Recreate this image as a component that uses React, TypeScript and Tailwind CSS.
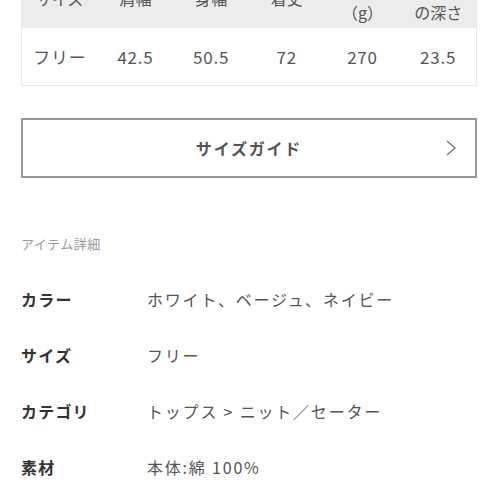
import React from "react";

const font = { fontFamily: '"Noto Sans CJK JP", "Noto Sans", sans-serif' };

const headers: string[][] = [
  ["サイズ"],
  ["肩幅"],
  ["身幅"],
  ["着丈"],
  ["重さ", "（g）"],
  ["ポケット", "の深さ"],
];
const values = ["フリー", "42.5", "50.5", "72", "270", "23.5"];

const details: [string, string][] = [
  ["カラー", "ホワイト、ベージュ、ネイビー"],
  ["サイズ", "フリー"],
  ["カテゴリ", "トップス > ニット／セーター"],
  ["素材", "本体:綿 100%"],
];

export default function App() {
  return (
    <div className="w-[500px] h-[500px] overflow-hidden bg-white" style={font}>
      <div className="pl-[21px] pr-[23px] -mt-[32px]">
        <div className="border-x border-b border-[#e8e8e8]">
          <div className="grid grid-cols-6 h-[60px] bg-[#ececec] text-[16px] text-[#555] leading-[28px]">
            {headers.map((h, i) => (
              <div key={i} className="flex flex-col items-center justify-center">
                {h.map((l, j) => (
                  <span key={j}>{l}</span>
                ))}
              </div>
            ))}
          </div>
          <div className="grid grid-cols-6 h-[57px] items-center text-[17px] text-[#555] tracking-[0.8px]">
            {values.map((v, i) => (
              <div key={i} className="text-center">
                {v}
              </div>
            ))}
          </div>
        </div>

        <div className="mt-[32px] h-[60px] border-2 border-[#999] flex items-center relative">
          <span className="flex-1 text-center text-[16px] font-bold text-[#555] tracking-[1.8px]">
            サイズガイド
          </span>
          <svg
            className="absolute right-[18px] top-1/2 -translate-y-1/2"
            width="12"
            height="18"
            viewBox="0 0 12 18"
            fill="none"
          >
            <path d="M2 2 L10 9 L2 16" stroke="#777" strokeWidth="1.4" />
          </svg>
        </div>

        <div className="mt-[56px] text-[13px] text-[#9a9a9a] tracking-[0.5px]">アイテム詳細</div>

        <div className="mt-[32px] flex flex-col gap-[30px]">
          {details.map(([k, v]) => (
            <div key={k} className="flex items-center h-[26px] text-[16px]">
              <span className="w-[126px] font-bold text-[#333] tracking-[1.2px]">{k}</span>
              <span className="text-[#555] tracking-[1.8px]">{v}</span>
            </div>
          ))}
        </div>
      </div>
    </div>
  );
}
